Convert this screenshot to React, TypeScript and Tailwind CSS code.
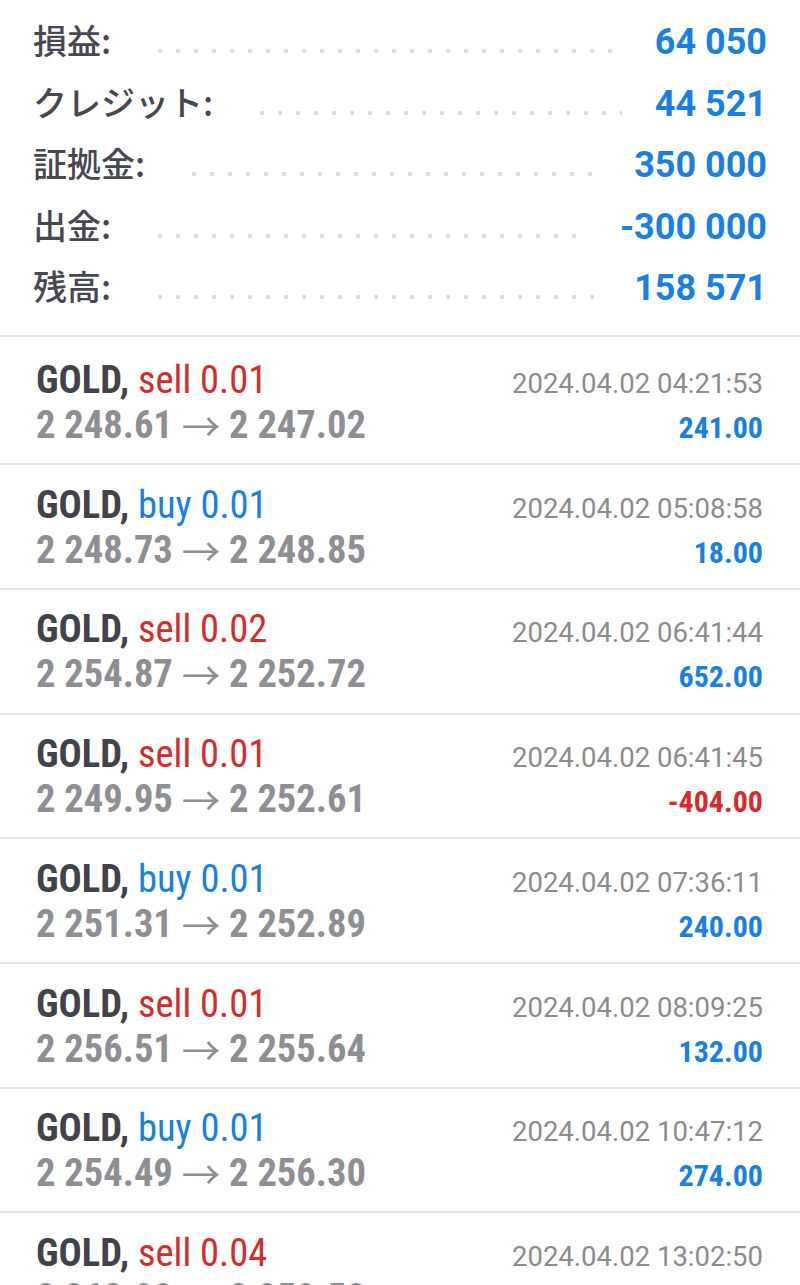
type Summary = { label: string; value: string };

type Deal = {
  side: "buy" | "sell";
  volume: string;
  open: string;
  close: string;
  time: string;
  profit: string;
};

const summary: Summary[] = [
  { label: "損益:", value: "64 050" },
  { label: "クレジット:", value: "44 521" },
  { label: "証拠金:", value: "350 000" },
  { label: "出金:", value: "-300 000" },
  { label: "残高:", value: "158 571" },
];

const deals: Deal[] = [
  { side: "sell", volume: "0.01", open: "2 248.61", close: "2 247.02", time: "2024.04.02 04:21:53", profit: "241.00" },
  { side: "buy", volume: "0.01", open: "2 248.73", close: "2 248.85", time: "2024.04.02 05:08:58", profit: "18.00" },
  { side: "sell", volume: "0.02", open: "2 254.87", close: "2 252.72", time: "2024.04.02 06:41:44", profit: "652.00" },
  { side: "sell", volume: "0.01", open: "2 249.95", close: "2 252.61", time: "2024.04.02 06:41:45", profit: "-404.00" },
  { side: "buy", volume: "0.01", open: "2 251.31", close: "2 252.89", time: "2024.04.02 07:36:11", profit: "240.00" },
  { side: "sell", volume: "0.01", open: "2 256.51", close: "2 255.64", time: "2024.04.02 08:09:25", profit: "132.00" },
  { side: "buy", volume: "0.01", open: "2 254.49", close: "2 256.30", time: "2024.04.02 10:47:12", profit: "274.00" },
  { side: "sell", volume: "0.04", open: "2 262.92", close: "2 259.58", time: "2024.04.02 13:02:50", profit: "2 017.00" },
];

const SummaryRow = ({ item }: { item: Summary }) => (
  <div className="flex h-[61.5px] items-baseline">
    <span className="font-['Noto_Sans_CJK_JP',sans-serif] text-[34px] font-medium leading-[61px] text-[#47474f]">
      {item.label}
    </span>
    {/* 点線リーダー */}
    <span className="ml-[40px] mr-[33px] h-[6px] flex-1 bg-[radial-gradient(circle,#dcdcdc_2px,transparent_2.6px)] bg-[length:18px_6px] bg-left bg-repeat-x" />
    <span className="font-['Roboto',sans-serif] text-[36px] font-bold leading-[61px] text-[#1a7fe3]">
      {item.value}
    </span>
  </div>
);

const DealRow = ({ deal }: { deal: Deal }) => {
  const sideColor = deal.side === "buy" ? "text-[#1a7fe3]" : "text-[#d62b2b]";
  const profitColor = deal.profit.startsWith("-") ? "text-[#d62b2b]" : "text-[#1a7fe3]";
  return (
    <div className="border-b-2 border-[#e4e4e4] pl-[36px] pr-[37px] pt-[16.6px] pb-[16.1px] font-['Roboto_Condensed',Roboto,sans-serif]">
      <div className="flex h-[45px] items-baseline justify-between">
        <span className="text-[38.5px] leading-[45px]">
          <span className="font-bold text-[#424249]">GOLD,</span>{" "}
          <span className={sideColor}>
            {deal.side} {deal.volume}
          </span>
        </span>
        <span className="font-['Roboto',sans-serif] text-[27.5px] leading-[45px] text-[#8c8c8c]">
          {deal.time}
        </span>
      </div>
      <div className="flex h-[45px] items-baseline justify-between">
        <span className="text-[38.5px] font-bold leading-[45px] text-[#8e8e93]">
          {deal.open}{" "}
          <span className="align-[-3px] font-['Noto_Sans_CJK_JP',sans-serif] font-normal">→</span>{" "}
          {deal.close}
        </span>
        <span className={`text-[30px] font-bold leading-[45px] ${profitColor}`}>{deal.profit}</span>
      </div>
    </div>
  );
};

export default function App() {
  return (
    <div className="h-[1285px] w-[800px] overflow-hidden bg-white">
      <div className="border-b-2 border-[#e4e4e4] pl-[33px] pr-[33px] pt-[9px] pb-[18px]">
        {summary.map((item) => (
          <SummaryRow key={item.label} item={item} />
        ))}
      </div>
      <div className="pt-[4px]">
        {deals.map((deal) => (
          <DealRow key={deal.time} deal={deal} />
        ))}
      </div>
    </div>
  );
}
